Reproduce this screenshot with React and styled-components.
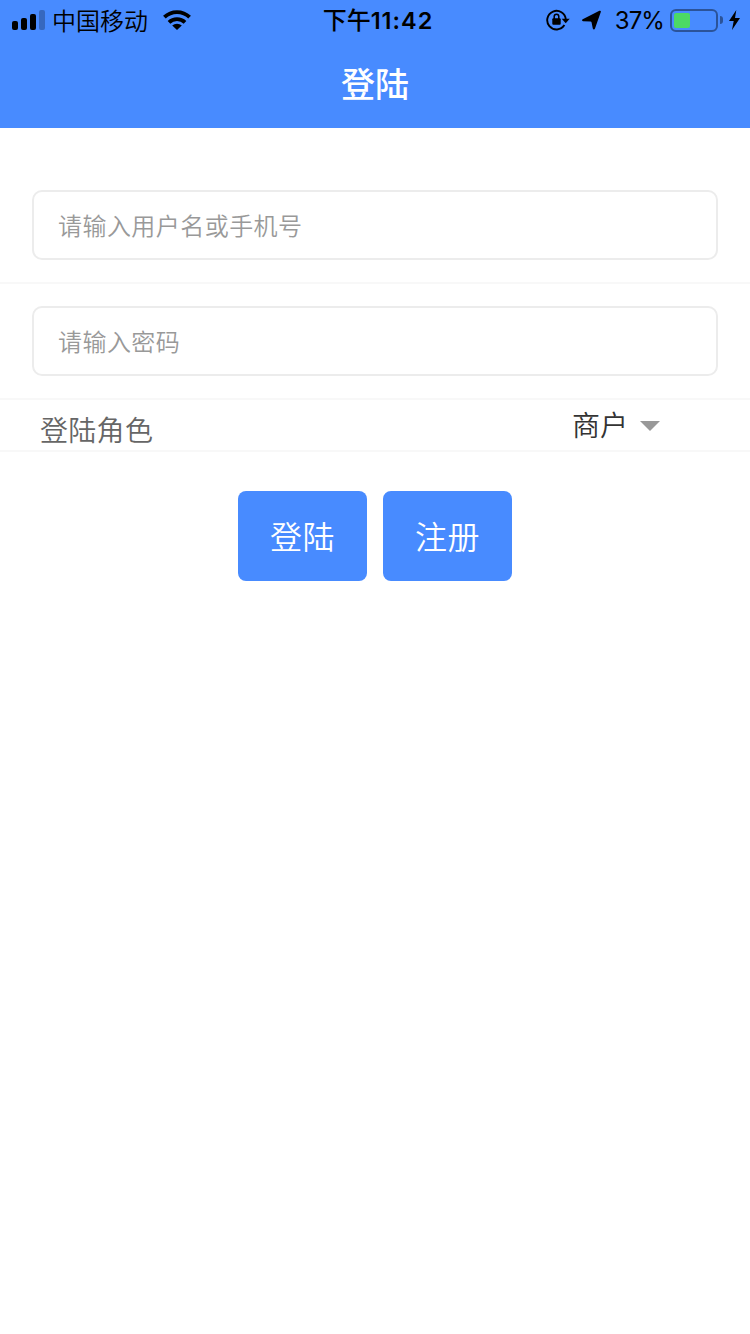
import React, { useState } from "react";
import styled, { createGlobalStyle } from "styled-components";

const App = () => {
  const [account, setAccount] = useState("");
  const [password, setPassword] = useState("");

  return (
    <>
      <GlobalStyle />
      <Header>
        <StatusBar />
        <Title>登陆</Title>
      </Header>
      <Form onSubmit={(e) => e.preventDefault()}>
        <Field>
          <Input
            placeholder="请输入用户名或手机号"
            value={account}
            onChange={(e) => setAccount(e.target.value)}
          />
        </Field>
        <Field>
          <Input
            type="password"
            placeholder="请输入密码"
            value={password}
            onChange={(e) => setPassword(e.target.value)}
          />
        </Field>
        <RoleRow>
          <RoleLabel>登陆角色</RoleLabel>
          <RoleSelect type="button">
            商户
            <Caret />
          </RoleSelect>
        </RoleRow>
        <Buttons>
          <Button type="submit">登陆</Button>
          <Button type="button">注册</Button>
        </Buttons>
      </Form>
    </>
  );
};

const StatusBar = () => {
  return (
    <Status>
      <StatusSide>
        <SignalIcon width="33" height="20" viewBox="0 0 33 20">
          <rect x="0" y="11" width="6" height="9" rx="2" />
          <rect x="9" y="8" width="6" height="12" rx="2" />
          <rect x="18" y="4" width="6" height="16" rx="2" />
          <rect x="27" y="0" width="6" height="20" rx="2" opacity="0.25" />
        </SignalIcon>
        <Carrier>中国移动</Carrier>
        <svg width="28" height="20" viewBox="0 0 28 20">
          <g fill="none" stroke="#000" strokeWidth="3.8">
            <path d="M1.4 7.2A18 18 0 0 1 26.6 7.2" />
            <path d="M6 12.4A11.5 11.5 0 0 1 22 12.4" />
          </g>
          <path d="M9.2 15.6A7 7 0 0 1 18.8 15.6L14 20Z" />
        </svg>
      </StatusSide>
      <Time>
        下午<Digits>11:42</Digits>
      </Time>
      <StatusSide $end>
        <LockIcon width="24" height="22" viewBox="0 0 24 22">
          <path
            d="M18.4 16.1A9.3 9.3 0 1 1 19.8 10.5"
            fill="none"
            stroke="#000"
            strokeWidth="1.9"
          />
          <path d="M15.7 9.8H23.7L19.7 14.3Z" />
          <rect x="6.3" y="9.3" width="8.4" height="6.5" rx="1" />
          <path
            d="M8.2 10V7.5A2.3 2.3 0 0 1 12.8 7.5V10"
            fill="none"
            stroke="#000"
            strokeWidth="1.5"
          />
        </LockIcon>
        <ArrowIcon width="19" height="20" viewBox="0 0 19 20">
          <path d="M17.4.8C18.4.4 19.2 1 18.8 2L13 18.4C12.6 19.7 11.2 19.7 10.8 18.4L9.6 12.4Q9.4 11.5 8.5 11.5L1 11.3C-.2 11.2-.3 9.9.7 9.3Z" />
        </ArrowIcon>
        <Percent>37%</Percent>
        <Battery>
          <Charge style={{ width: "40%" }} />
        </Battery>
        <BatteryTip />
        <svg width="11" height="20" viewBox="0 0 11 20">
          <path d="M7.3 0L0 11H4.7L3 20L11 8H6Z" />
        </svg>
      </StatusSide>
    </Status>
  );
};

const GlobalStyle = createGlobalStyle`
*{
    box-sizing: border-box;
}
body{
    margin: 0;
    background: #fff;
    font-family: "Noto Sans CJK SC", sans-serif;
    font-weight: 350;
}
input, button{
    font-family: inherit;
    font-weight: inherit;
}
`;

const Header = styled.header`
    height: 128px;
    background: #488bff;
`;

const Status = styled.div`
    display: grid;
    grid-template-columns: 1fr auto 1fr;
    grid-template-rows: 40px;
    height: 40px;
    padding: 0 10px 0 12px;
    color: #000;
`;

const StatusSide = styled.div`
    display: flex;
    align-items: center;
    justify-content: ${({ $end }) => ($end ? "flex-end" : "flex-start")};
    svg{
        flex: none;
    }
`;

const SignalIcon = styled.svg`
    margin-right: 7px;
`;

const Carrier = styled.span`
    margin-right: 15px;
    font-size: 24px;
    line-height: 40px;
`;

const Time = styled.div`
    padding-left: 4px;
    font-size: 24px;
    font-weight: 500;
    line-height: 38px;
`;

const Digits = styled.span`
    font-family: Inter, sans-serif;
    font-size: 23.5px;
    font-weight: 600;
    letter-spacing: 1px;
`;

const LockIcon = styled.svg`
    margin-right: 12px;
`;

const ArrowIcon = styled.svg`
    margin-right: 14px;
`;

const Percent = styled.span`
    margin-right: 6px;
    padding-top: 2px;
    font-family: Inter, sans-serif;
    font-size: 24px;
    font-weight: 400;
    line-height: 38px;
    letter-spacing: -0.9px;
`;

const Battery = styled.div`
    width: 48px;
    height: 23px;
    padding: 2px;
    border: 2px solid #2b5399;
    border-radius: 6px;
`;

const Charge = styled.div`
    height: 100%;
    border-radius: 2px;
    background: #4cd964;
`;

const BatteryTip = styled.div`
    width: 3px;
    height: 8px;
    margin: 0 6px 0 2px;
    border-radius: 0 3px 3px 0;
    background: #2b5399;
`;

const Title = styled.h1`
    margin: 0;
    color: #fff;
    font-size: 34px;
    font-weight: 500;
    line-height: 85px;
    text-align: center;
`;

const Form = styled.form`
    padding-top: 40px;
`;

const Field = styled.div`
    padding: 22px 32px;
    border-bottom: 2px solid #f8f8f8;
`;

const Input = styled.input`
    display: block;
    width: 100%;
    height: 70px;
    padding: 0 24px 2px;
    border: 2px solid #ececec;
    border-radius: 10px;
    outline: none;
    background: #fff;
    color: #333;
    font-size: 24px;
    letter-spacing: 0.45px;
    &::placeholder{
        color: #999;
        opacity: 1;
    }
`;

const RoleRow = styled.div`
    display: flex;
    align-items: flex-start;
    justify-content: space-between;
    height: 52px;
    padding: 0 90px 0 40px;
    border-bottom: 2px solid #f8f8f8;
`;

const RoleLabel = styled.span`
    padding-top: 9px;
    color: #666;
    font-size: 28px;
    line-height: 40px;
    letter-spacing: 0.3px;
`;

const RoleSelect = styled.button`
    display: flex;
    align-items: center;
    gap: 12px;
    padding: 4px 0 0;
    border: 0;
    background: none;
    color: #333;
    font-size: 28px;
    line-height: 40px;
`;

const Caret = styled.span`
    margin-top: 4px;
    border: 10px solid transparent;
    border-top-color: #999;
    border-bottom: 0;
`;

const Buttons = styled.div`
    display: flex;
    justify-content: center;
    gap: 16px;
    padding-top: 39px;
`;

const Button = styled.button`
    width: 129px;
    height: 90px;
    padding: 0 0 2px;
    border: 0;
    border-radius: 8px;
    background: #488bff;
    color: #fff;
    font-size: 32px;
    letter-spacing: 0.5px;
`;

export default App;
